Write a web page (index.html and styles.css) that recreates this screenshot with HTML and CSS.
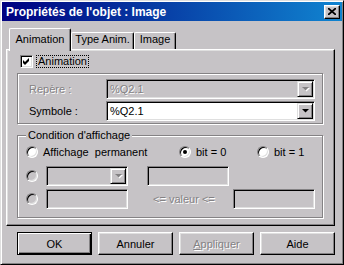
FILE: index.html
```html
<!DOCTYPE html>
<html lang="fr">
<head>
    <meta charset="UTF-8">
    <title>Propriétés de l'objet : Image</title>
    <link rel="stylesheet" href="styles.css">
</head>
<body>

    <div class="window">

        <!-- Title bar -->
        <div class="titlebar">
            <span class="title">Propriétés de l'objet : Image</span>
            <span class="title-btn">
                <svg width="8" height="7" viewBox="0 0 8 7"><path d="M0 0 L8 7 M8 0 L0 7" stroke="#000" stroke-width="1.7"/></svg>
            </span>
        </div>

        <div class="body">

            <!-- Tabs -->
            <div class="tabs">
                <div class="tab active">Animation</div>
                <div class="tab tab-type">Type Anim.</div>
                <div class="tab tab-image">Image</div>
            </div>

            <div class="panel">
                <div class="check-row">
                    <span class="checkbox">
                        <svg width="7" height="7" viewBox="0 0 7 7"><polygon points="0,2 2,4 6,0 6,3 2,7 0,5" fill="#000"/></svg>
                    </span>
                    <span class="focus">Animation</span>
                </div>

                <!-- Repère / Symbole -->
                <div class="frame">
                    <div class="field-row">
                        <span class="field-label disabled">Repère :</span>
                        <div class="combo disabled">
                            <span class="combo-text">%Q2.1</span>
                            <span class="combo-btn"><svg width="7" height="4" viewBox="0 0 7 4"><polygon points="0,0 7,0 3.5,3.5"/></svg></span>
                        </div>
                    </div>
                    <div class="field-row">
                        <span class="field-label">Symbole :</span>
                        <div class="combo">
                            <span class="combo-text">%Q2.1</span>
                            <span class="combo-btn"><svg width="7" height="4" viewBox="0 0 7 4"><polygon points="0,0 7,0 3.5,3.5"/></svg></span>
                        </div>
                    </div>
                </div>

                <!-- Condition d'affichage -->
                <div class="group">
                    <span class="group-caption">Condition d'affichage</span>
                    <div class="cond-row">
                        <span class="opt opt-perm"><span class="radio"></span>Affichage&nbsp; permanent</span>
                        <span class="opt opt-bit"><span class="radio checked"></span>bit = 0</span>
                        <span class="opt"><span class="radio"></span>bit = 1</span>
                    </div>
                    <div class="cond-row row-fields">
                        <span class="radio off"></span>
                        <div class="combo small disabled">
                            <span class="combo-text"></span>
                            <span class="combo-btn"><svg width="7" height="4" viewBox="0 0 7 4"><polygon points="0,0 7,0 3.5,3.5"/></svg></span>
                        </div>
                        <div class="edit edit-right"></div>
                    </div>
                    <div class="cond-row row-fields row-last">
                        <span class="radio off"></span>
                        <div class="edit"></div>
                        <span class="range-label">&lt;= valeur &lt;=</span>
                        <div class="edit"></div>
                    </div>
                </div>
            </div>

            <!-- Buttons -->
            <div class="buttons">
                <span class="btn default">OK</span>
                <span class="btn">Annuler</span>
                <span class="btn disabled"><u>A</u>ppliquer</span>
                <span class="btn">Aide</span>
            </div>

        </div>
    </div>

</body>
</html>
```
FILE: styles.css
```css
body {
    margin: 0;
    font-family: "Liberation Sans", Arial, sans-serif;
    font-size: 11px;
    color: #000;
    background: #c6c3c6;
}

.window {
    width: 344px;
    height: 265px;
    box-sizing: border-box;
    padding: 1px;
    background: #c6c3c6;
    border: 1px solid;
    border-color: #dfdfdf #000 #000 #dfdfdf;
    box-shadow: inset 1px 1px #fff, inset -1px -1px #848284;
}

/* Title bar */
.titlebar {
    height: 19px;
    display: flex;
    align-items: center;
    justify-content: space-between;
    padding: 0 2px 0 4px;
    background: linear-gradient(90deg, #000080, #1084d0);
}

.title {
    color: #fff;
    font-weight: bold;
    font-size: 12px;
}

.title-btn {
    width: 16px;
    height: 14px;
    box-sizing: border-box;
    display: flex;
    align-items: center;
    justify-content: center;
    background: #c6c3c6;
    border: 1px solid;
    border-color: #fff #000 #000 #fff;
    box-shadow: inset -1px -1px #848284, inset 1px 1px #dfdfdf;
}

.body {
    padding-left: 4px;
}

/* Tabs */
.tabs {
    display: flex;
    align-items: flex-end;
    height: 21px;
    margin-top: 7px;
    padding-left: 3px;
}

.tab {
    height: 17px;
    box-sizing: border-box;
    text-align: center;
    line-height: 13px;
    background: #c6c3c6;
    border: 1px solid;
    border-color: #fff #000 transparent #fff;
    border-bottom: none;
    border-radius: 2px 2px 0 0;
    box-shadow: inset -1px 0 #848284;
}

.tab.active {
    width: 62px;
    height: 23px;
    margin-bottom: -2px;
    padding-top: 4px;
    position: relative;
    z-index: 1;
}

.tab-type {
    width: 63px;
}

.tab-image {
    width: 42px;
}

.panel {
    width: 329px;
    height: 177px;
    box-sizing: border-box;
    padding: 5px 11px 0 10px;
    border: 1px solid;
    border-color: #fff #000 #000 #fff;
    box-shadow: inset -1px -1px #848284, inset 1px 1px #dfdfdf;
}

/* Checkbox */
.check-row {
    display: flex;
    align-items: center;
    height: 13px;
    padding-left: 3px;
}

.checkbox {
    width: 13px;
    height: 13px;
    box-sizing: border-box;
    display: flex;
    align-items: center;
    justify-content: center;
    background: #fff;
    border: 1px solid;
    border-color: #848284 #fff #fff #848284;
    box-shadow: inset 1px 1px #000, inset -1px -1px #dfdfdf;
    margin-right: 3px;
}

.focus {
    border: 1px dotted #000;
    padding: 0 1px;
    line-height: 11px;
}

/* Etched frames */
.frame {
    margin-top: 5px;
    padding: 5px 7px 2px 11px;
    border: 1px solid #848284;
    box-shadow: inset 1px 1px #fff, 1px 1px #fff;
}

.field-row {
    display: flex;
    align-items: center;
}

.field-row + .field-row {
    margin-top: 2px;
}

.field-label {
    width: 77px;
}

.disabled {
    color: #848284;
    text-shadow: 1px 1px #fff;
}

/* Combo and edit fields */
.combo,
.edit {
    height: 20px;
    box-sizing: border-box;
    background: #fff;
    border: 1px solid;
    border-color: #848284 #fff #fff #848284;
    box-shadow: inset 1px 1px #000, inset -1px -1px #dfdfdf;
}

.combo {
    flex: 1;
    display: flex;
    padding: 1px;
}

.combo.disabled,
.edit {
    background: #c6c3c6;
}

.combo-text {
    flex: 1;
    padding-left: 2px;
    line-height: 16px;
}

.combo-btn {
    width: 16px;
    height: 16px;
    box-sizing: border-box;
    display: flex;
    align-items: center;
    justify-content: center;
    background: #c6c3c6;
    border: 1px solid;
    border-color: #dfdfdf #000 #000 #dfdfdf;
    box-shadow: inset 1px 1px #fff, inset -1px -1px #848284;
}

.combo-btn svg {
    fill: #000;
}

.combo.disabled .combo-btn svg {
    fill: #848284;
    filter: drop-shadow(1px 1px 0 #fff);
}

.combo.small {
    flex: none;
    width: 82px;
}

.edit {
    width: 82px;
}

/* Condition group */
.group {
    position: relative;
    margin-top: 11px;
    padding: 8px 7px 8px 8px;
    border: 1px solid #848284;
    box-shadow: inset 1px 1px #fff, 1px 1px #fff;
}

.group-caption {
    position: absolute;
    top: -7px;
    left: 8px;
    padding: 0 2px;
    line-height: 13px;
    background: #c6c3c6;
}

.cond-row {
    display: flex;
    align-items: center;
    height: 16px;
}

.row-fields {
    height: 20px;
    margin-top: 6px;
}

.row-last {
    margin-top: 3px;
}

.opt {
    display: flex;
    align-items: center;
    gap: 5px;
}

.opt-perm {
    width: 153px;
}

.opt-bit {
    width: 78px;
}

.radio {
    width: 12px;
    height: 12px;
    flex: none;
    box-sizing: border-box;
    display: flex;
    align-items: center;
    justify-content: center;
    border-radius: 50%;
    background: #fff;
    border: 1px solid;
    border-color: #848284 #fff #fff #848284;
    box-shadow: inset 1px 1px #000, inset -1px -1px #dfdfdf;
}

.radio.off {
    background: #c6c3c6;
    margin-right: 8px;
}

.radio.checked::after {
    content: "";
    width: 4px;
    height: 4px;
    border-radius: 50%;
    background: #000;
}

.edit-right {
    margin-left: 19px;
}

.range-label {
    width: 80px;
    margin-left: 25px;
    color: #848284;
    text-shadow: 1px 1px #fff;
}

/* Buttons */
.buttons {
    display: flex;
    gap: 6px;
    margin-top: 6px;
    padding-left: 11px;
}

.btn {
    width: 75px;
    height: 23px;
    box-sizing: border-box;
    display: flex;
    align-items: center;
    justify-content: center;
    border: 1px solid;
    border-color: #fff #000 #000 #fff;
    box-shadow: inset -1px -1px #848284, inset 1px 1px #dfdfdf;
}

.btn.default {
    border-color: #000;
    box-shadow: inset 1px 1px #fff, inset -1px -1px #000, inset -2px -2px #848284;
}
```
